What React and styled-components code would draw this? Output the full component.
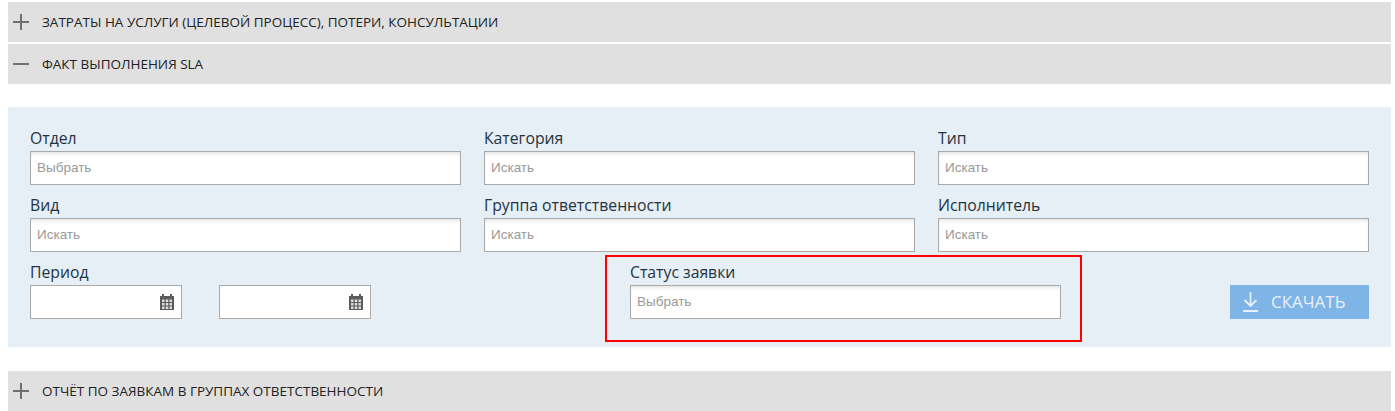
import React from 'react'
import styled, { createGlobalStyle } from 'styled-components'

const GlobalStyle = createGlobalStyle`
  html, body {
    margin: 0;
    padding: 0;
    background: #fff;
    overflow: hidden;
  }
  body {
    font-family: "Open Sans", sans-serif;
  }
`
const Page = styled.div`
  width: 1383px;
  margin-left: 8px;
  padding-top: 2px;
`
const SectionBar = styled.div`
  display: flex;
  align-items: center;
  height: 40px;
  background: #e0e0e0;
  margin-top: ${props => props.$before || 0}px;
  margin-bottom: ${props => props.$after || 2}px;
  padding-left: 5px;
`
const BarIcon = styled.svg`
  width: 16px;
  height: 16px;
  margin-right: 13px;
  flex: none;
`
const BarTitle = styled.span`
  font-size: 13.5px;
  color: #222;
`
const Panel = styled.div`
  position: relative;
  height: 240px;
  box-sizing: border-box;
  background: #e6eef6;
  padding: 22px 22px 0;
`
const FieldGrid = styled.div`
  display: grid;
  grid-template-columns: repeat(3, 431px);
  column-gap: 23px;
`
const BottomRow = styled.div`
  display: flex;
  align-items: flex-start;
`
const Field = styled.div`
  height: 67px;
  margin-left: ${props => props.$offset || 0}px;
`
const Label = styled.div`
  height: 22px;
  font-size: 15.75px;
  line-height: 18px;
  color: #24343f;
`
const TextInput = styled.input`
  display: block;
  box-sizing: border-box;
  width: 431px;
  height: 34px;
  padding: 0 6px 2px;
  border: 1px solid #aaa;
  border-radius: 0;
  outline: none;
  background: #fff;
  box-shadow: inset 0 3px 4px -2px rgba(0, 0, 0, 0.15);
  font-family: "Liberation Sans", Arial, sans-serif;
  font-size: 13.5px;
  color: #333;
  &::placeholder {
    color: #999;
    opacity: 1;
  }
`
const DateRow = styled.div`
  display: flex;
  gap: 37px;
`
const DateBox = styled.div`
  position: relative;
  width: 152px;
  height: 34px;
  box-sizing: border-box;
  border: 1px solid #aaa;
  background: #fff;
`
const CalendarIcon = styled.svg`
  position: absolute;
  top: 8px;
  right: 7px;
  width: 14px;
  height: 16px;
`
const DownloadButton = styled.button`
  display: flex;
  align-items: center;
  box-sizing: border-box;
  width: 139px;
  height: 34px;
  margin: 22px 0 0 169px;
  padding: 0 0 2px 13px;
  border: 0;
  background: #7fb4e6;
  color: #e8f1fa;
  font-family: "Open Sans", sans-serif;
  font-size: 17px;
  cursor: pointer;
`
const DownloadIcon = styled.svg`
  width: 15px;
  height: 20px;
  margin: 2px 13px 0 0;
  flex: none;
`
const Highlight = styled.div`
  position: absolute;
  left: 597px;
  top: 148px;
  width: 477px;
  height: 87px;
  box-sizing: border-box;
  border: 2px solid #f00;
  pointer-events: none;
`

const Plus = () => (
  <BarIcon viewBox="0 0 16 16">
    <path d="M0 8h16M8 0v16" stroke="#707070" strokeWidth="2" fill="none" />
  </BarIcon>
)
const Minus = () => (
  <BarIcon viewBox="0 0 16 16">
    <path d="M0 8h16" stroke="#707070" strokeWidth="2" fill="none" />
  </BarIcon>
)
const Calendar = () => (
  <CalendarIcon viewBox="0 0 14 16">
    <path d="M0 2h14v14H0z" fill="#5c5c5c" />
    <path d="M2 0h2v3H2zM10 0h2v3h-2z" fill="#5c5c5c" />
    <path
      d="M2 5.5h2.5v2.5H2zM5.75 5.5h2.5v2.5h-2.5zM9.5 5.5H12v2.5H9.5zM2 9h2.5v2.5H2zM5.75 9h2.5v2.5h-2.5zM9.5 9H12v2.5H9.5zM2 12.5h2.5V15H2zM5.75 12.5h2.5V15h-2.5zM9.5 12.5H12V15H9.5z"
      fill="#dcdcdc"
    />
  </CalendarIcon>
)

const fields = [
  ['Отдел', 'Выбрать'],
  ['Категория', 'Искать'],
  ['Тип', 'Искать'],
  ['Вид', 'Искать'],
  ['Группа ответственности', 'Искать'],
  ['Исполнитель', 'Искать'],
]

const App = () => (
  <Page>
    <GlobalStyle />
    <SectionBar>
      <Plus />
      <BarTitle>ЗАТРАТЫ НА УСЛУГИ (ЦЕЛЕВОЙ ПРОЦЕСС), ПОТЕРИ, КОНСУЛЬТАЦИИ</BarTitle>
    </SectionBar>
    <SectionBar $after={23}>
      <Minus />
      <BarTitle>ФАКТ ВЫПОЛНЕНИЯ SLA</BarTitle>
    </SectionBar>
    <Panel>
      <FieldGrid>
        {fields.map(([label, hint]) => (
          <Field key={label}>
            <Label>{label}</Label>
            <TextInput placeholder={hint} readOnly />
          </Field>
        ))}
      </FieldGrid>
      <BottomRow>
        <Field>
          <Label>Период</Label>
          <DateRow>
            <DateBox><Calendar /></DateBox>
            <DateBox><Calendar /></DateBox>
          </DateRow>
        </Field>
        <Field $offset={259}>
          <Label>Статус заявки</Label>
          <TextInput placeholder="Выбрать" readOnly />
        </Field>
        <DownloadButton>
          <DownloadIcon viewBox="0 0 15 20">
            <path
              d="M7.5 0v14M1.5 8l6 6 6-6M0 19h15"
              stroke="#e8f1fa"
              strokeWidth="1.8"
              fill="none"
            />
          </DownloadIcon>
          СКАЧАТЬ
        </DownloadButton>
      </BottomRow>
      <Highlight />
    </Panel>
    <SectionBar $before={24}>
      <Plus />
      <BarTitle>ОТЧЁТ ПО ЗАЯВКАМ В ГРУППАХ ОТВЕТСТВЕННОСТИ</BarTitle>
    </SectionBar>
  </Page>
)

export default App
